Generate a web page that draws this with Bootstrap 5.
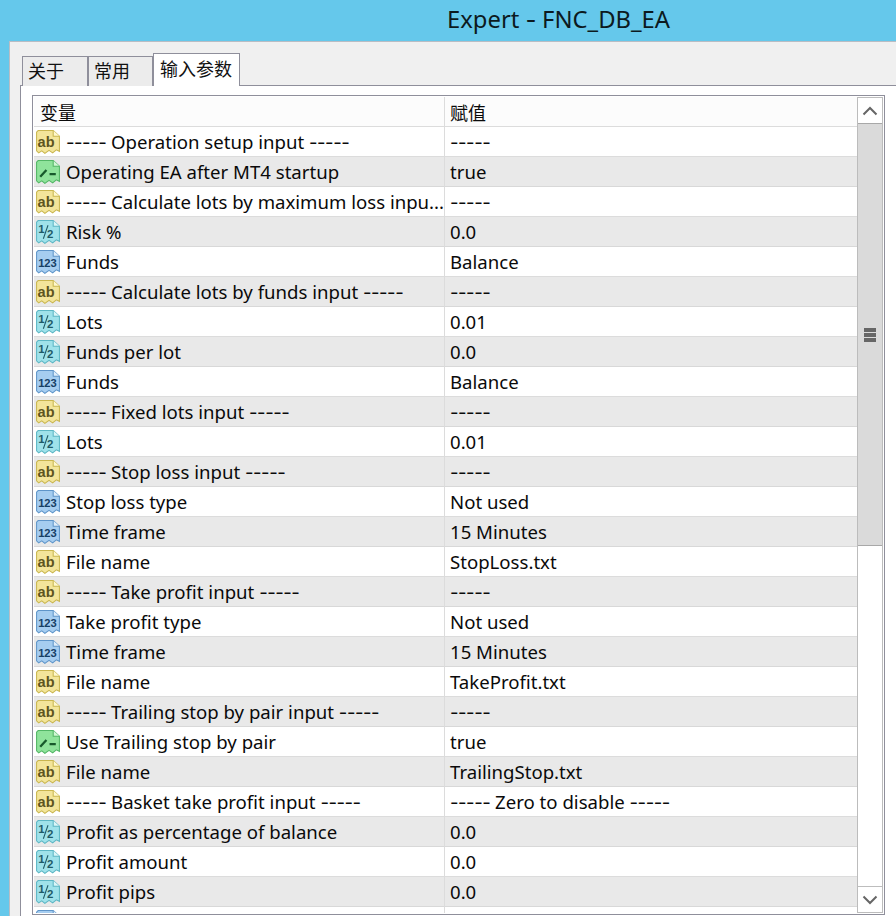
<!DOCTYPE html>
<html lang="en">
<head>
<meta charset="utf-8">
<title>Expert - FNC_DB_EA</title>
<link rel="stylesheet" href="https://cdn.jsdelivr.net/npm/bootstrap@5.3.0/dist/css/bootstrap.min.css">
<style>
html,body{height:916px;overflow:hidden}
body{background:#65c8eb;color:#0a0a0a;font-family:"Noto Sans","Noto Sans CJK SC",sans-serif;font-size:18.6px;line-height:1}
.win-title{height:41px;padding-left:447px;padding-bottom:2px;font-size:23.8px;color:#0c1a20}
.win-panel{margin-left:9px;height:875px;background:#f0f0f0;border-top:1px solid #b9bdc4;border-left:1px solid #b9bdc4;padding:14px 0 0 10px}
.tab-strip{height:30px;gap:0;border:0;padding-left:2px;margin-bottom:-1px;position:relative;z-index:1}
.tab-item{font-family:"Noto Sans CJK SC","Noto Sans",sans-serif;font-size:18px;color:#111;background:#ececec;border:1px solid #8f8f9b;border-bottom:0;height:30px;padding:4px 0 0 5px}
.tab-a{width:66px}
.tab-b{width:65px}
.tab-c{width:87px;height:33px;margin-top:-3px;background:#fff;padding:5px 0 0 6px}
.tab-body{background:#fff;border-top:1px solid #8f8f9b;border-left:1px solid #8f8f9b;height:831px;padding:9px 0 0 11px}
.param-box{width:853px;height:820px;border:1px solid #8f8f9b;padding:1px;overflow:hidden;background:#fff}
.grid-wrap{width:823px;height:816px;overflow:hidden}
.param-table{table-layout:fixed;width:823px;margin:0;border-collapse:separate;border-spacing:0;--bs-table-bg:transparent}
.param-table th,.param-table td{height:30px;padding:1px 0 0;border:0;border-bottom:1px solid #dcdcdc;vertical-align:middle;font-weight:400;white-space:nowrap;overflow:hidden;color:#0a0a0a;font-size:18.6px}
.param-table th{font-family:"Noto Sans CJK SC","Noto Sans",sans-serif;background:#fcfcfc;font-size:18px;padding-left:6px}
.param-table .col-name{width:411px;border-right:1px solid #dcdcdc}
.param-table td.col-val,.param-table th.col-val{padding-left:5px}
.param-table tr.odd-row td{background:#e9e9e9;border-bottom-color:#d8d8d8}
.cell-inner{display:flex;align-items:center;gap:5px;padding-left:1px}
.p-icon{width:26px;height:27px;flex:none}
.dash-run{font-family:Inter,"Noto Sans",sans-serif;letter-spacing:-.5px}
.scroll-rail{width:26px;height:816px;border:1px solid #bcbcbc;background:#fff}
.scroll-btn{height:25px;flex:none;background:#fff}
.scroll-btn.dn{border-top:1px solid #bdbdbd;height:26px;margin-top:auto}
.scroll-thumb{height:423px;background:#dadada;border-top:1px solid #a8a8a8;border-bottom:1px solid #a8a8a8;flex:none}
.grip{width:12px;height:14px;background:repeating-linear-gradient(to bottom,#666 0 4px,#dadada 4px 5px)}
</style>
</head>
<body>
<svg width="0" height="0" style="position:absolute" aria-hidden="true">
  <defs>
    <symbol id="ic-ab" viewBox="0 0 25 26"><path d="M3 1.500H17.500L23.500 7V21.500L20.500 20 17 23 13.500 20.500 9.500 23.500 6.500 21 3.500 23 1.500 21V3Z" fill="#f3e59a" stroke="#c9b64f"/><path d="M17.500 1.500V7H23.500" fill="#fff8cf" stroke="#c9b64f"/><text x="2.500" y="17" font-family="Liberation Sans" font-size="14" font-weight="700" fill="#5e5520">ab</text></symbol>
    <symbol id="ic-bool" viewBox="0 0 25 26"><path d="M3 1.500H17.500L23.500 7V21.500L20.500 20 17 23 13.500 20.500 9.500 23.500 6.500 21 3.500 23 1.500 21V3Z" fill="#8fe39b" stroke="#52b565"/><path d="M17.500 1.500V7H23.500" fill="#d2f7d5" stroke="#52b565"/><path d="M5 17 11 10.500M14 14.500H20" fill="none" stroke="#17592b" stroke-width="2.200"/></symbol>
    <symbol id="ic-half" viewBox="0 0 25 26"><path d="M3 1.500H17.500L23.500 7V21.500L20.500 20 17 23 13.500 20.500 9.500 23.500 6.500 21 3.500 23 1.500 21V3Z" fill="#9fe2ea" stroke="#5cb6c4"/><path d="M17.500 1.500V7H23.500" fill="#dbf6f8" stroke="#5cb6c4"/><text x="3" y="13" font-family="Liberation Sans" font-size="11" font-weight="700" fill="#1f5a68">1</text><path d="M8 19 12.500 6" stroke="#1f5a68" fill="none"/><text x="11.500" y="18.500" font-family="Liberation Sans" font-size="11" font-weight="700" fill="#1f5a68">2</text></symbol>
    <symbol id="ic-num" viewBox="0 0 25 26"><path d="M3 1.500H17.500L23.500 7V21.500L20.500 20 17 23 13.500 20.500 9.500 23.500 6.500 21 3.500 23 1.500 21V3Z" fill="#a6cdf0" stroke="#5f95c9"/><path d="M17.500 1.500V7H23.500" fill="#e0eefa" stroke="#5f95c9"/><text x="3" y="17" font-family="Liberation Sans" font-size="11" font-weight="700" fill="#173f66" textLength="18" lengthAdjust="spacingAndGlyphs">123</text></symbol>
  </defs>
</svg>
<div class="win-title d-flex align-items-center"><span>Expert <span class="dash-run">-</span> FNC_DB_EA</span></div>
<div class="win-panel">
  <div class="tab-strip d-flex">
    <div class="tab-item tab-a">关于</div>
    <div class="tab-item tab-b">常用</div>
    <div class="tab-item tab-c">输入参数</div>
  </div>
  <div class="tab-body">
    <div class="param-box d-flex">
      <div class="grid-wrap">
        <table class="table param-table">
          <thead><tr><th class="col-name">变量</th><th class="col-val">赋值</th></tr></thead>
          <tbody id="rows"></tbody>
        </table>
      </div>
      <div class="scroll-rail d-flex flex-column">
        <div class="scroll-btn d-flex align-items-center justify-content-center"><svg width="16" height="10" viewBox="0 0 16 10"><path d="M1.500 8.500 8 2l6.500 6.500" fill="none" stroke="#666" stroke-width="2"/></svg></div>
        <div class="scroll-thumb d-flex flex-column align-items-center justify-content-center"><div class="grip"></div></div>
        <div class="scroll-btn dn d-flex align-items-center justify-content-center"><svg width="16" height="10" viewBox="0 0 16 10"><path d="M1.500 1.500 8 8l6.500-6.500" fill="none" stroke="#666" stroke-width="2"/></svg></div>
      </div>
    </div>
  </div>
</div>
<script>
const data=[
["ab","----- Operation setup input -----","-----"],
["bool","Operating EA after MT4 startup","true"],
["ab","----- Calculate lots by maximum loss inpu...","-----"],
["half","Risk %","0.0"],
["num","Funds","Balance"],
["ab","----- Calculate lots by funds input -----","-----"],
["half","Lots","0.01"],
["half","Funds per lot","0.0"],
["num","Funds","Balance"],
["ab","----- Fixed lots input -----","-----"],
["half","Lots","0.01"],
["ab","----- Stop loss input -----","-----"],
["num","Stop loss type","Not used"],
["num","Time frame","15 Minutes"],
["ab","File name","StopLoss.txt"],
["ab","----- Take profit input -----","-----"],
["num","Take profit type","Not used"],
["num","Time frame","15 Minutes"],
["ab","File name","TakeProfit.txt"],
["ab","----- Trailing stop by pair input -----","-----"],
["bool","Use Trailing stop by pair","true"],
["ab","File name","TrailingStop.txt"],
["ab","----- Basket take profit input -----","----- Zero to disable -----"],
["half","Profit as percentage of balance","0.0"],
["half","Profit amount","0.0"],
["half","Profit pips","0.0"],
["num","","" ]
];
const fmt=s=>s.replace(/-----/g,'<span class="dash-run">-----</span>');
document.getElementById("rows").innerHTML=data.map((r,i)=>`<tr class="${i%2?'odd-row':''}"><td class="col-name"><div class="cell-inner"><svg class="p-icon"><use href="#ic-${r[0]}"/></svg><span>${fmt(r[1])}</span></div></td><td class="col-val">${fmt(r[2])}</td></tr>`).join("");
</script>
<script src="https://cdn.jsdelivr.net/npm/bootstrap@5.3.0/dist/js/bootstrap.bundle.min.js"></script>
</body>
</html>
